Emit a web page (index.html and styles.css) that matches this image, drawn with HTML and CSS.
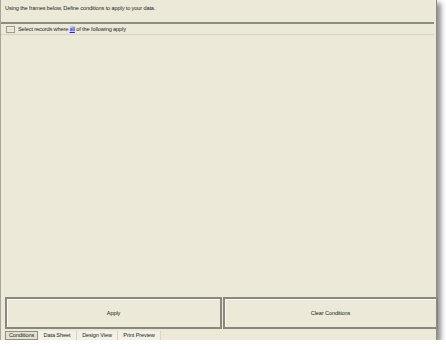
FILE: index.html
```html
<!DOCTYPE html>
<html>
<head>
    <meta charset="UTF-8">
    <link rel="stylesheet" href="styles.css">
</head>
<body>
    <div class="window">
        <div class="intro">Using the frames below, Define conditions to apply to your data.</div>
        <div class="criteria">
            <button class="more-btn">...</button>
            <span>Select records where <a class="all-link">all</a> of the following apply</span>
        </div>
        <div class="frames"></div>
        <div class="actions">
            <button class="action-btn">Apply</button>
            <button class="action-btn">Clear Conditions</button>
        </div>
        <div class="tabs">
            <div class="tab active">Conditions</div>
            <div class="tab tab-data">Data Sheet</div>
            <div class="tab tab-design">Design View</div>
            <div class="tab tab-print">Print Preview</div>
        </div>
    </div>
</body>
</html>
```

FILE: styles.css
```css
body {
    margin: 0;
    background-color: #fff;
    font-family: "Liberation Sans", Arial, sans-serif;
    font-size: 5.6px;
    letter-spacing: -0.12px;
    color: #1e1e1e;
}
.window {
    width: 435px;
    height: 340px;
    background-color: #ece9d8;
    border-left: 1px solid #a9a699;
    border-right: 1px solid #8d8b80;
    box-shadow: 4px 3px 5px rgba(0, 0, 0, 0.45);
    display: flex;
    flex-direction: column;
}
.intro {
    height: 22px;
    padding: 5px 0 0 4px;
    box-sizing: border-box;
}
.criteria {
    display: flex;
    align-items: center;
    gap: 3px;
    height: 10px;
    padding: 0 4px 0 5px;
    margin-right: 2px;
    border-top: 2px solid #8e8c7f;
    border-bottom: 1px solid #d7d4c5;
}
.more-btn {
    width: 9px;
    height: 7px;
    padding: 0;
    font-size: 4px;
    line-height: 4px;
    color: #777;
    background-color: #ece9d8;
    border: 1px solid #9c9a8e;
    font-family: inherit;
}
.all-link {
    color: #2323d6;
    text-decoration: underline;
    background-color: #c6c9ef;
}
.frames {
    flex: 1;
}
.actions {
    display: grid;
    grid-template-columns: 217px 215px;
    gap: 1px;
    padding-left: 4px;
    height: 32px;
}
.action-btn {
    background-color: #ece9d8;
    border: 2px solid #8a887c;
    box-shadow: inset 1px 1px #fbfaf4;
    font-family: inherit;
    font-size: 5.6px;
    letter-spacing: -0.12px;
    color: #1e1e1e;
    padding: 0;
}
.tabs {
    display: flex;
    margin-top: 2px;
    padding-left: 4px;
    height: 9px;
}
.tab {
    box-sizing: border-box;
    text-align: center;
    line-height: 9px;
    background-color: #f3f1e6;
    border-right: 1px solid #d8d5c7;
}
.tab.active {
    width: 33px;
    background-color: #e4e1d2;
    border: 1px solid #8f8d81;
    line-height: 7px;
}
.tab-data {
    width: 39px;
}
.tab-design {
    width: 41px;
}
.tab-print {
    width: 43px;
}
```
